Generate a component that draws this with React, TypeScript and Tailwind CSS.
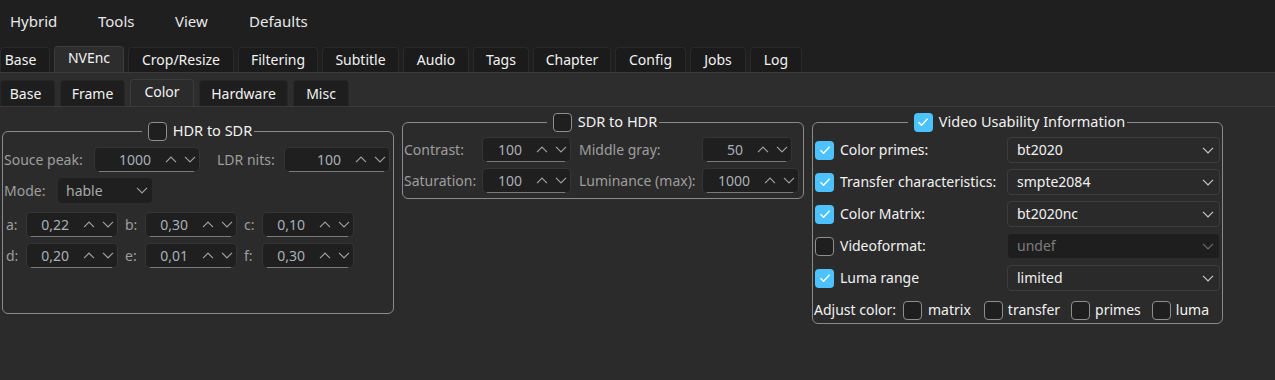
import React from "react"

const menu = [
  { label: "Hybrid", w: "w-[88px]" },
  { label: "Tools", w: "w-[77px]" },
  { label: "View", w: "w-[74px]" },
  { label: "Defaults", w: "w-[80px]" },
]

const mainTabs = [
  { label: "Base", w: "w-[50px] pr-[9px]" },
  { label: "NVEnc", w: "w-[70px]", active: true },
  { label: "Crop/Resize", w: "w-[106px]" },
  { label: "Filtering", w: "w-[80px]" },
  { label: "Subtitle", w: "w-[77px]" },
  { label: "Audio", w: "w-[66px]" },
  { label: "Tags", w: "w-[56px]" },
  { label: "Chapter", w: "w-[78px]" },
  { label: "Config", w: "w-[71px]" },
  { label: "Jobs", w: "w-[56px]" },
  { label: "Log", w: "w-[52px]" },
]

const subTabs = [
  { label: "Base", w: "w-[55px] pr-[4px]" },
  { label: "Frame", w: "w-[65px]" },
  { label: "Color", w: "w-[64px]", active: true },
  { label: "Hardware", w: "w-[89px]" },
  { label: "Misc", w: "w-[56px]" },
]

function Chevron({ up, color = "#a0a0a0" }: { up?: boolean; color?: string }) {
  return (
    <svg width="12" height="7" viewBox="0 0 12 7" className="shrink-0">
      <path d={up ? "M1 6.2L6 1.2L11 6.2" : "M1 0.8L6 5.8L11 0.8"} fill="none" stroke={color} strokeWidth="1.2" />
    </svg>
  )
}

function Check({ on }: { on?: boolean }) {
  if (on) {
    return (
      <span className="flex h-[19px] w-[19px] shrink-0 items-center justify-center rounded-[4px] bg-[#4cc2ff]">
        <svg width="12" height="10" viewBox="0 0 12 10">
          <path d="M1.5 5.3L4.6 8.2L10.6 1.8" fill="none" stroke="#ffffff" strokeWidth="1.4" />
        </svg>
      </span>
    )
  }
  return <span className="block h-[19px] w-[19px] shrink-0 rounded-[4px] border border-[#8e8e8e] bg-[#1f1f1f]" />
}

function Spin({ value, className }: { value: string; className: string }) {
  return (
    <div className={`relative flex h-[25px] shrink-0 items-center rounded-[4px] border border-[#353535] bg-[#1f1f1f] pr-[3px] ${className}`}>
      <span className="flex-1 text-right text-[#aab0b6]">{value}</span>
      <span className="ml-[14px] flex items-center gap-[7px]">
        <Chevron up />
        <Chevron />
      </span>
      <span className="absolute bottom-[-1px] left-[4px] right-[5px] h-px bg-[#7a7a7a]" />
    </div>
  )
}

function Legend({ label, on }: { label: string; on?: boolean }) {
  return (
    <legend className="mx-auto flex h-[20px] items-center gap-[6px] pl-[6px] pr-[2px] text-[14.5px] text-[#f2f2f2]">
      <Check on={on} />
      <span className="-mt-[2px]">{label}</span>
    </legend>
  )
}

const vui = [
  { label: "Color primes:", value: "bt2020", on: true },
  { label: "Transfer characteristics:", value: "smpte2084", on: true },
  { label: "Color Matrix:", value: "bt2020nc", on: true },
  { label: "Videoformat:", value: "undef", on: false },
  { label: "Luma range", value: "limited", on: true },
]

export default function App() {
  return (
    <div className="flex h-[380px] w-[1275px] flex-col overflow-hidden bg-[#2b2b2b] font-['Noto_Sans',sans-serif] text-[14px] leading-[20px]">
      {/* menu bar */}
      <div className="flex h-[42px] items-center bg-[#1f1f1f] pl-[10px] text-[15px] text-[#e8e8e8]">
        {menu.map((m) => (
          <span key={m.label} className={m.w}>
            {m.label}
          </span>
        ))}
      </div>

      {/* main tabs */}
      <div className="flex h-[30px] items-end gap-[4px] bg-[#1f1f1f] text-[14px] text-[#f2f2f2]">
        {mainTabs.map((t) =>
          t.active ? (
            <div key={t.label} className={`flex h-[26px] justify-center rounded-t-[4px] border border-b-0 border-[#3c3c3c] bg-[#2d2d2d] pt-[1px] ${t.w}`}>
              {t.label}
            </div>
          ) : (
            <div key={t.label} className={`flex h-[25px] items-center justify-center rounded-t-[4px] border border-b-0 border-[#2a2a2a] bg-[#1b1b1b] ${t.w}`}>
              {t.label}
            </div>
          )
        )}
      </div>

      {/* sub tabs */}
      <div className="flex h-[35px] items-end gap-[5px] border-y border-[#3a3a3a] bg-[#2d2d2d] text-[14px] text-[#f2f2f2]">
        {subTabs.map((t) =>
          t.active ? (
            <div key={t.label} className={`flex h-[27px] justify-center rounded-t-[4px] border border-b-0 border-[#3c3c3c] bg-[#2b2b2b] pt-[2px] ${t.w}`}>
              {t.label}
            </div>
          ) : (
            <div key={t.label} className={`flex h-[26px] items-center justify-center rounded-t-[4px] border border-b-0 border-[#262626] bg-[#1e1e1e] ${t.w}`}>
              {t.label}
            </div>
          )
        )}
      </div>

      {/* content */}
      <div className="flex items-start">
        {/* HDR to SDR */}
        <fieldset className="ml-[2px] mt-[14px] w-[392px] rounded-[6px] border border-[#8a8a8a] pb-[45px] text-[#9e9e9e]">
          <Legend label="HDR to SDR" />
          <div className="mt-[6px] flex items-center pl-[1px]">
            <span className="w-[90px]">Souce peak:</span>
            <Spin value="1000" className="w-[106px]" />
            <span className="ml-[17px] w-[67px]">LDR nits:</span>
            <Spin value="100" className="w-[106px]" />
          </div>
          <div className="mt-[6px] flex items-center pl-[1px]">
            <span className="w-[54px]">Mode:</span>
            <div className="flex h-[25px] w-[94px] items-center justify-between rounded-[4px] bg-[#1f1f1f] pl-[8px] pr-[4px] text-[#a8a8a8]">
              <span>hable</span>
              <Chevron />
            </div>
          </div>
          {[
            [["a:", "0,22"], ["b:", "0,30"], ["c:", "0,10"]],
            [["d:", "0,20"], ["e:", "0,01"], ["f:", "0,30"]],
          ].map((row, i) => (
            <div key={i} className={`flex items-center ${i === 0 ? "mt-[9px]" : "mt-[6px]"}`}>
              <span className="w-[23px] pl-[3px]">{row[0][0]}</span>
              <Spin value={row[0][1]} className="w-[92px]" />
              <span className="w-[27px] pl-[7px]">{row[1][0]}</span>
              <Spin value={row[1][1]} className="w-[92px]" />
              <span className="w-[25px] pl-[7px]">{row[2][0]}</span>
              <Spin value={row[2][1]} className="w-[92px]" />
            </div>
          ))}
        </fieldset>

        {/* SDR to HDR */}
        <fieldset className="ml-[8px] mt-[5px] w-[402px] rounded-[6px] border border-[#8a8a8a] pb-[5px] text-[#9e9e9e]">
          <Legend label="SDR to HDR" />
          <div className="mt-[5px] flex items-center">
            <span className="w-[79px] pl-[1px]">Contrast:</span>
            <Spin value="100" className="w-[89px]" />
            <span className="ml-[8px] w-[123px]">Middle gray:</span>
            <Spin value="50" className="w-[90px]" />
          </div>
          <div className="mt-[6px] flex items-center">
            <span className="w-[79px] pl-[1px]">Saturation:</span>
            <Spin value="100" className="w-[89px]" />
            <span className="ml-[8px] w-[123px]">Luminance (max):</span>
            <Spin value="1000" className="w-[97px]" />
          </div>
        </fieldset>

        {/* VUI */}
        <fieldset className="ml-[8px] mt-[5px] w-[411px] rounded-[6px] border border-[#8a8a8a] pb-[3px] text-[#f2f2f2]">
          <Legend label="Video Usability Information" on />
          <div className="mt-[5px] flex flex-col gap-[6px]">
            {vui.map((r) => (
              <div key={r.label} className="flex h-[26px] items-center pl-[2px] pr-[2px]">
                <Check on={r.on} />
                <span className="ml-[6px] flex-1">{r.label}</span>
                {r.on ? (
                  <div className="flex h-[26px] w-[213px] items-center justify-between rounded-[4px] border border-[#3d3d3d] bg-[#2a2a2a] pl-[9px] pr-[5px]">
                    <span>{r.value}</span>
                    <Chevron color="#c8c8c8" />
                  </div>
                ) : (
                  <div className="flex h-[26px] w-[213px] items-center justify-between rounded-[4px] border border-[#2b2b2b] bg-[#1e1e1e] pl-[9px] pr-[5px] text-[#7c7c7c]">
                    <span>{r.value}</span>
                    <Chevron color="#6c6c6c" />
                  </div>
                )}
              </div>
            ))}
          </div>
          <div className="mt-[9px] flex h-[20px] items-center pl-[1px]">
            <span>Adjust color:</span>
            <span className="ml-[7px]"><Check /></span>
            <span className="ml-[6px]">matrix</span>
            <span className="ml-[13px]"><Check /></span>
            <span className="ml-[5px]">transfer</span>
            <span className="ml-[11px]"><Check /></span>
            <span className="ml-[5px]">primes</span>
            <span className="ml-[11px]"><Check /></span>
            <span className="ml-[5px]">luma</span>
          </div>
        </fieldset>
      </div>
    </div>
  )
}
